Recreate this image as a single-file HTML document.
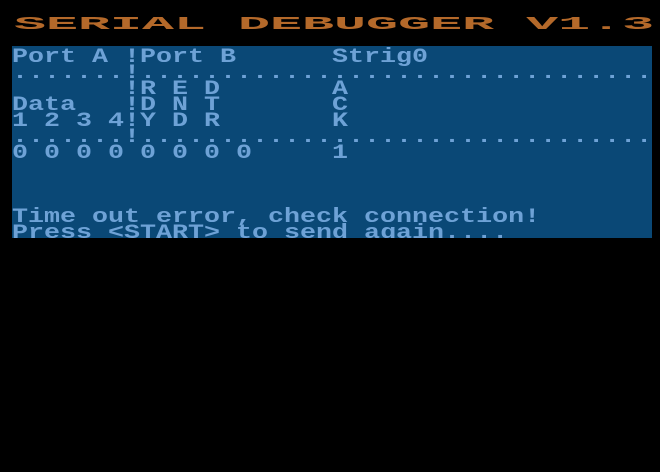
<!DOCTYPE html>
<html><head><meta charset="utf-8"><style>
html,body{margin:0;padding:0;background:#000;width:660px;height:472px;overflow:hidden}
.title{position:absolute;left:14px;top:16px;height:18px;font:bold 18px/18px "Liberation Mono",monospace;color:#b4692a;white-space:pre;transform-origin:0 0;transform:scaleX(2.963)}
.scr{position:absolute;left:12px;top:46px;width:640px;height:192px;background:#0a4876;overflow:hidden}
.r{position:absolute;left:0;height:16px;font:bold 20px/16px "Liberation Mono",monospace;color:#6ea2d6;white-space:pre;transform-origin:0 0;transform:scaleX(1.3333)}
</style></head><body>
<div class="title">SERIAL DEBUGGER V1.3</div>
<div class="scr">
<div class="r" style="top:4px">Port A !Port B      Strig0</div>
<div class="r" style="top:20px">.......!................................</div>
<div class="r" style="top:36px">       !R E D       A</div>
<div class="r" style="top:52px">Data   !D N T       C</div>
<div class="r" style="top:68px">1 2 3 4!Y D R       K</div>
<div class="r" style="top:84px">.......!................................</div>
<div class="r" style="top:100px">0 0 0 0 0 0 0 0     1</div>
<div class="r" style="top:164px">Time out error, check connection!</div>
<div class="r" style="top:180px">Press &lt;START&gt; to send again....</div>
</div>
</body></html>
